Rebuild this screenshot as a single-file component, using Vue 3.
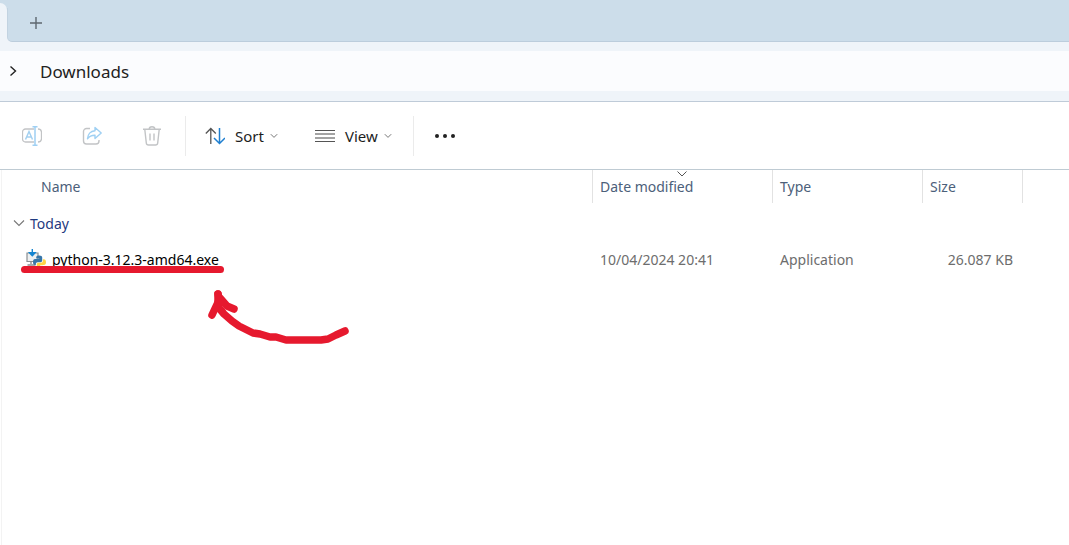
<script setup>
const files = [
  { name: 'python-3.12.3-amd64.exe', date: '10/04/2024 20:41', type: 'Application', size: '26.087 KB' },
]
</script>

<template>
  <div class="explorer">
    <header class="tabs">
      <div class="active-tab"></div>
      <div class="strip">
        <button class="new-tab" aria-label="New tab">
          <svg width="14" height="14" viewBox="0 0 14 14"><path d="M7 1v12M1 7h12" stroke="#5d676f" stroke-width="1.4" /></svg>
        </button>
      </div>
    </header>

    <nav class="address" aria-label="Address">
      <div class="crumbs">
        <svg width="8" height="12" viewBox="0 0 8 12"><path d="M1.500 1.500 6.500 6l-5 4.500" fill="none" stroke="#222" stroke-width="1.400" /></svg>
        <a href="#" class="crumb">Downloads</a>
      </div>
    </nav>

    <div class="toolbar" role="toolbar">
      <button class="icon-btn" aria-label="Rename" disabled>
        <svg width="20" height="20" viewBox="0 0 20 20" fill="none">
          <path d="M12 3H3.500A3 3 0 0 0 .5 6v7a3 3 0 0 0 3 3H12M16 3a3.500 3.500 0 0 1 3.500 3v7a3.500 3.500 0 0 1-3.500 3" stroke="#c2c4c6" stroke-width="1.300" />
          <path d="M3.500 13.500 7 5.500l3.500 8M4.800 11h4.500" stroke="#a3d0f0" stroke-width="1.500" />
          <path d="M10.500.7h5M10.500 19.300h5M13 .7v18.600" stroke="#9fd0f3" stroke-width="1.500" />
        </svg>
      </button>
      <button class="icon-btn" aria-label="Share" disabled>
        <svg width="20" height="20" viewBox="0 0 20 20" fill="none">
          <path d="M8 2.500H4.500A3 3 0 0 0 1.500 5.500V15a3 3 0 0 0 3 3h9.500a3 3 0 0 0 3-3v-1" stroke="#c2c4c6" stroke-width="1.400" />
          <path d="M13 1.500 19.200 7 13 12.500V9.300C9.500 9.200 7.500 10.200 5.500 12.800 5.700 8.500 8.500 5 13 4.700z" stroke="#9fd0f3" stroke-width="1.400" stroke-linejoin="round" />
        </svg>
      </button>
      <button class="icon-btn" aria-label="Delete" disabled>
        <svg width="20" height="20" viewBox="0 0 20 20" fill="none" stroke="#c2c4c6" stroke-width="1.400">
          <path d="M1 3.300h18M7.200 3a2.800 2.300 0 0 1 5.600 0M2.800 3.500 4.300 17a2.200 2.200 0 0 0 2.200 2h7a2.200 2.200 0 0 0 2.200-2l1.500-13.500M8 7.500v7M12 7.500v7" />
        </svg>
      </button>
      <span class="divider"></span>
      <button class="menu-btn sort">
        <svg width="20" height="18" viewBox="0 0 20 18" fill="none" stroke-width="1.300">
          <path d="M5.800 17V1.500M.8 6.500l5-5 5 5" stroke="#555" />
          <path d="M14.500 1v15.500M9 11l5.500 5.500L20 11" stroke="#1f7fd0" stroke-width="1.500" />
        </svg>
        <span>Sort</span>
        <svg width="8" height="6" viewBox="0 0 8 6"><path d="m.8 1.200 3.200 3.200 3.200-3.200" fill="none" stroke="#777" /></svg>
      </button>
      <button class="menu-btn view">
        <svg width="20" height="14" viewBox="0 0 20 14">
          <path d="M0 1.500h20M0 12.500h20" stroke="#555" />
          <path d="M0 5h20M0 9h20" stroke="#858585" stroke-width="1.300" />
        </svg>
        <span>View</span>
        <svg width="8" height="6" viewBox="0 0 8 6"><path d="m.8 1.200 3.200 3.200 3.200-3.200" fill="none" stroke="#777" /></svg>
      </button>
      <span class="divider"></span>
      <button class="more" aria-label="See more">
        <svg width="20" height="4" viewBox="0 0 20 4" fill="#222"><circle cx="2" cy="2" r="2" /><circle cx="10" cy="2" r="2" /><circle cx="18" cy="2" r="2" /></svg>
      </button>
    </div>

    <main class="list">
      <table>
        <colgroup>
          <col class="c-name" /><col class="c-date" /><col class="c-type" /><col class="c-size" /><col />
        </colgroup>
        <thead>
          <tr>
            <th class="name-head">Name</th>
            <th>
              Date modified
              <svg class="sort-mark" width="10" height="6" viewBox="0 0 10 6"><path d="m.5.500 4.500 4.500L9.500.500" fill="none" stroke="#555" /></svg>
            </th>
            <th>Type</th>
            <th>Size</th>
            <th></th>
          </tr>
        </thead>
        <tbody>
          <tr class="group">
            <td colspan="5">
              <button class="group-btn">
                <svg width="12" height="8" viewBox="0 0 12 8"><path d="m1 1.500 5 5 5-5" fill="none" stroke="#777" stroke-width="1.100" /></svg>
                <span>Today</span>
              </button>
            </td>
          </tr>
          <tr v-for="file in files" :key="file.name" class="file">
            <td>
              <div class="file-name">
                <svg width="20" height="20" viewBox="0 0 20 20">
                  <path d="M4 4H1v8.500h11V4H9" fill="#eef0f1" stroke="#8a8f93" stroke-width="1.200" />
                  <path d="M5 13v2M1.500 16h8" stroke="#8a8f93" stroke-width="1.400" />
                  <path d="M6.300 0v6M3.500 3.800l2.800 3 2.800-3z" fill="#1685d0" stroke="#1685d0" stroke-width="1.400" />
                  <path d="M10.200 8.500c0-1.500 1-2 3-2s3 .7 3 2v3c0 1.200-.8 1.800-2 1.800h-2.400c-1.300 0-2 .8-2 2v.7H9c-1.300 0-2-1.200-2-3s.7-3 2-3h4.200V9.500h-3z" fill="#3776a8" />
                  <path d="M16.900 10.200h.9c1.500 0 2.200 1.200 2.200 3s-.7 2.800-2.200 2.800h-3.600v.7h2.600v1c0 1.300-1 2-3 2s-3-.7-3-2v-2.400c0-1 .6-1.500 1.600-1.500h2.600c1.200 0 1.900-.8 1.900-2z" fill="#ffd445" />
                </svg>
                <span>{{ file.name }}</span>
                <i class="underline"></i>
              </div>
            </td>
            <td>{{ file.date }}</td>
            <td>{{ file.type }}</td>
            <td class="size">{{ file.size }}</td>
            <td></td>
          </tr>
        </tbody>
      </table>
      <svg class="arrow" width="150" height="60" viewBox="203 288 150 60" fill="none" stroke="#e6192e" stroke-width="7.500" stroke-linecap="round" stroke-linejoin="round">
        <path d="M218 294v8l1 6 5 6 8 7 7 5 14 7 7 1 10 3h6l10 3h35l7-1 8-4 9-4" />
        <path d="m212 315 8-17 7 8 7 3M218 294l2 8" />
      </svg>
    </main>
  </div>
</template>

<style>
html, body { background: #fff; }
</style>

<style scoped>
.explorer {
  display: flex;
  flex-direction: column;
  min-height: 100vh;
  overflow: hidden;
  font-family: "Noto Sans", "Open Sans", sans-serif;
  font-size: 14px;
  color: #1d1d1d;
}
button {
  display: flex;
  align-items: center;
  padding: 0;
  border: 0;
  background: none;
  font: inherit;
  color: inherit;
}
svg { display: block; flex: none; }
.tabs { display: flex; height: 42px; background: #ccddea; }
.active-tab {
  width: 7px;
  margin-top: 3px;
  background: #eff4f9;
  border-top-right-radius: 7px;
}
.strip {
  display: flex;
  flex: 1;
  align-items: center;
  box-sizing: border-box;
  margin-top: 8px;
  padding: 0 0 4px 21px;
  border-left: 1px solid #c2d3e1;
  border-bottom: 1px solid #bccddc;
  border-bottom-left-radius: 5px;
  background: #ccddea;
  box-shadow: -4px 4px 0 #eff4f9;
}
.address {
  position: relative;
  padding: 9px 0 10px;
  border-bottom: 1px solid #bfcbd8;
  background: #eff4f9;
}
.crumbs {
  display: flex;
  align-items: center;
  gap: 23px;
  height: 40px;
  padding-left: 9px;
  background: #fbfcfe;
}
.crumb { color: #222; font-size: 17px; text-decoration: none; }
.toolbar {
  display: flex;
  align-items: center;
  height: 67px;
  padding-left: 22px;
  border-bottom: 1px solid #bfcbd3;
}
.icon-btn { margin-right: 40px; }
.icon-btn:nth-child(3) { margin-right: 23px; }
.divider { width: 1px; height: 40px; background: #ebebeb; }
.menu-btn span { margin: 0 6px 0 10px; font-size: 15px; }
.sort { margin-left: 19px; }
.view { margin-left: 37px; }
.view + .divider { margin-left: 21px; }
.more { margin-left: 21px; }
.list { position: relative; flex: 1; margin-left: 1px; border-left: 1px solid #f3f3f3; }
table { width: 100%; table-layout: fixed; border-collapse: separate; border-spacing: 0; }
.c-name { width: 590px; }
.c-date { width: 180px; }
.c-type { width: 150px; }
.c-size { width: 100px; }
th {
  position: relative;
  height: 33px;
  padding: 0 0 0 7px;
  border-left: 1px solid #e2e2e2;
  font-weight: 400;
  text-align: left;
  color: #4c607a;
}
.name-head { padding-left: 39px; border-left: 0; }
.sort-mark { position: absolute; top: 1px; left: 84px; }
td { height: 32px; padding: 0 0 0 8px; color: #6d6d6d; white-space: nowrap; }
.group td { height: 40px; padding-left: 11px; }
.group-btn { gap: 5px; color: #1f3a80; }
.file td:first-child { padding-left: 24px; }
.file-name { position: relative; display: flex; width: fit-content; align-items: center; gap: 6px; color: #000; }
.underline {
  position: absolute;
  right: -5px;
  bottom: -4px;
  left: -5px;
  height: 7px;
  border-radius: 4px;
  background: #e6192e;
}
.file .size { padding: 0 9px 0 0; text-align: right; }
.arrow { position: absolute; top: 118px; left: 201px; }
</style>
